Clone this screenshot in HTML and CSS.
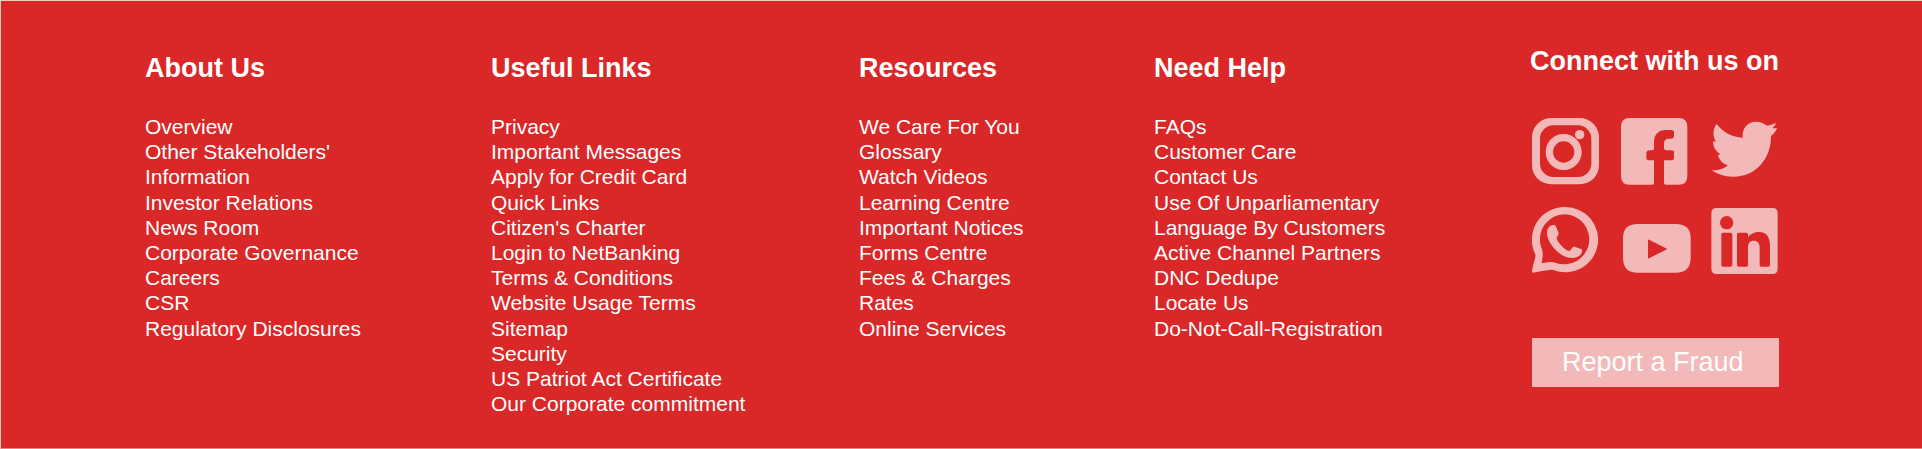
FILE: index.html
```html
<!DOCTYPE html>
<html lang="en">
<head>
<meta charset="utf-8">
<meta name="viewport" content="width=device-width, initial-scale=1">
<title>Footer</title>
<link rel="stylesheet" href="styles.css">
</head>
<body>
<footer class="footer">
  <nav class="column" aria-labelledby="about">
    <h2 class="heading" id="about">About Us</h2>
    <ul class="links">
      <li><a href="#">Overview</a></li>
      <li><a href="#">Other Stakeholders'<br>Information</a></li>
      <li><a href="#">Investor Relations</a></li>
      <li><a href="#">News Room</a></li>
      <li><a href="#">Corporate Governance</a></li>
      <li><a href="#">Careers</a></li>
      <li><a href="#">CSR</a></li>
      <li><a href="#">Regulatory Disclosures</a></li>
    </ul>
  </nav>
  <nav class="column" aria-labelledby="useful">
    <h2 class="heading" id="useful">Useful Links</h2>
    <ul class="links">
      <li><a href="#">Privacy</a></li>
      <li><a href="#">Important Messages</a></li>
      <li><a href="#">Apply for Credit Card</a></li>
      <li><a href="#">Quick Links</a></li>
      <li><a href="#">Citizen's Charter</a></li>
      <li><a href="#">Login to NetBanking</a></li>
      <li><a href="#">Terms &amp; Conditions</a></li>
      <li><a href="#">Website Usage Terms</a></li>
      <li><a href="#">Sitemap</a></li>
      <li><a href="#">Security</a></li>
      <li><a href="#">US Patriot Act Certificate</a></li>
      <li><a href="#">Our Corporate commitment</a></li>
    </ul>
  </nav>
  <nav class="column" aria-labelledby="resources">
    <h2 class="heading" id="resources">Resources</h2>
    <ul class="links">
      <li><a href="#">We Care For You</a></li>
      <li><a href="#">Glossary</a></li>
      <li><a href="#">Watch Videos</a></li>
      <li><a href="#">Learning Centre</a></li>
      <li><a href="#">Important Notices</a></li>
      <li><a href="#">Forms Centre</a></li>
      <li><a href="#">Fees &amp; Charges</a></li>
      <li><a href="#">Rates</a></li>
      <li><a href="#">Online Services</a></li>
    </ul>
  </nav>
  <nav class="column" aria-labelledby="help">
    <h2 class="heading" id="help">Need Help</h2>
    <ul class="links">
      <li><a href="#">FAQs</a></li>
      <li><a href="#">Customer Care</a></li>
      <li><a href="#">Contact Us</a></li>
      <li><a href="#">Use Of Unparliamentary<br>Language By Customers</a></li>
      <li><a href="#">Active Channel Partners</a></li>
      <li><a href="#">DNC Dedupe</a></li>
      <li><a href="#">Locate Us</a></li>
      <li><a href="#">Do-Not-Call-Registration</a></li>
    </ul>
  </nav>
  <section class="connect" aria-labelledby="connect">
    <h2 class="heading" id="connect">Connect with us on</h2>
    <div class="social">
      <a href="#" aria-label="Instagram">
        <svg class="icon" viewBox="0 0 201 201"><path fill-rule="evenodd" d="M58 0H143A58 58 0 0 1 201 58V141A58 58 0 0 1 143 199H58A58 58 0 0 1 0 141V58A58 58 0 0 1 58 0ZM64 22A40 40 0 0 0 24 62V137A40 40 0 0 0 64 177H138A40 40 0 0 0 178 137V62A40 40 0 0 0 138 22Z"/><path fill-rule="evenodd" d="M41 102a54 54 0 1 0 108 0a54 54 0 1 0-108 0ZM63 102a32 32 0 1 0 64 0a32 32 0 1 0-64 0Z"/><circle cx="143" cy="50" r="14"/></svg>
      </a>
      <a href="#" aria-label="Facebook">
        <svg class="icon" viewBox="0 0 201 201"><path d="M26 0H173Q199 0 199 26V173Q199 200 173 200H135Q129 200 129 194V127H152Q159 127 159 120V103Q159 97 152 97H136Q129 97 129 91V76Q129 62 143 62H150Q159 62 159 53V44Q159 36 150 36H136C112 36 99 49 99 73V91Q99 97 93 97H86Q76 97 76 106V119Q76 127 86 127H99V194Q99 200 93 200H26Q0 200 0 173V26Q0 0 26 0Z"/></svg>
      </a>
      <a href="#" aria-label="Twitter">
        <svg class="icon" viewBox="0 0 201 201"><path d="M20 18C39 43 65 57 98 59C95 30 113 11 138 11C152 11 163 16 171 23C181 22 190 18 198 15C196 21 193 26 187 30C192 31 197 31 201 30C199 40 191 47 183 54C184 116 143 176 70 176C41 176 20 168 6 156C25 159 41 153 54 142C39 138 28 127 24 112L32 109C18 101 9 88 9 70L18 71C9 56 6 36 20 18Z"/></svg>
      </a>
      <a href="#" aria-label="WhatsApp">
        <svg class="icon" viewBox="0 0 201 201"><path fill-rule="evenodd" d="M99 0A98 98 0 1 1 64 189C57 187 49 189 3 197Q0 197 0 193C4 166 12 153 10 142A98 98 0 0 1 99 0ZM99 22A75 75 0 0 0 30 127C34 139 32 150 29 169C48 165 58 163 70 167A75 75 0 1 0 99 22Z"/><path d="M62 54C50 57 45 66 45 78C45 94 58 117 72 130C89 147 106 154 123 153C139 152 150 144 151 130C151 128 149 127 147 126L128 119C119 117 118 133 110 132C97 130 74 102 74 94C74 88 83 83 79 76L71 57C69 54 66 53 62 54Z"/></svg>
      </a>
      <a href="#" aria-label="YouTube">
        <svg class="icon" viewBox="0 0 201 201"><path fill-rule="evenodd" d="M50 51H164Q209 51 209 94V152Q209 197 164 197H50Q6 197 6 152V94Q6 51 50 51ZM81 100V152Q81 155 84 154L135 128Q138 126 135 124L84 98Q81 97 81 100Z"/></svg>
      </a>
      <a href="#" aria-label="LinkedIn">
        <svg class="icon" viewBox="0 0 201 201"><path fill-rule="evenodd" d="M20 3H187Q203 3 203 19V185Q203 201 187 201H20Q4 201 4 185V19Q4 3 20 3ZM30 47a20 20 0 1 0 40 0a20 20 0 1 0-40 0ZM39 77Q34 77 34 82V174Q34 179 39 179H62Q67 179 67 174V82Q67 77 62 77ZM86 77Q81 77 81 82V174Q81 179 86 179H109Q114 179 114 174V122C114 108 120 101 131 101C143 101 149 109 149 122V174Q149 179 154 179H175Q180 179 180 174V118C180 90 170 75 147 75C132 75 121 81 114 90V82Q114 77 109 77Z"/></svg>
      </a>
    </div>
    <button class="report" type="button">Report a Fraud</button>
  </section>
</footer>
</body>
</html>
```
FILE: styles.css
```css
* {
  box-sizing: border-box;
}

body {
  margin: 0;
  background: #da2728;
  font-family: "Liberation Sans", Arial, sans-serif;
  color: #fff;
}

.footer {
  display: grid;
  grid-template-columns: 346fr 368fr 295fr 376fr 249px;
  min-height: 100vh;
  padding: 45px 143px 16px 144px;
  border: 1px solid #f3c6c0;
  border-right: 0;
  border-bottom-color: #f08080;
  background: #da2728;
}

.column {
  padding-top: 7px;
}

.heading {
  margin: 0;
  font-size: 27px;
  line-height: 30px;
  font-weight: 700;
  white-space: nowrap;
}

.links {
  margin: 31px 0 0;
  padding: 0;
  list-style: none;
  font-size: 21px;
  line-height: 1.2;
}

.links a {
  color: inherit;
  text-decoration: none;
}

.social {
  display: grid;
  grid-template-columns: repeat(3, 67px);
  gap: 22px;
  margin: 42px 0 64px 2px;
}

.icon {
  display: block;
  width: 67px;
  height: 67px;
  overflow: visible;
  fill: #f3b8b8;
}

.report {
  display: block;
  width: 247px;
  margin-left: 2px;
  padding: 9px 30px;
  border: 0;
  background: #f3b8b8;
  color: #fff;
  font: 27px/31px "Liberation Sans", Arial, sans-serif;
  text-align: left;
  white-space: nowrap;
  cursor: pointer;
}
```
